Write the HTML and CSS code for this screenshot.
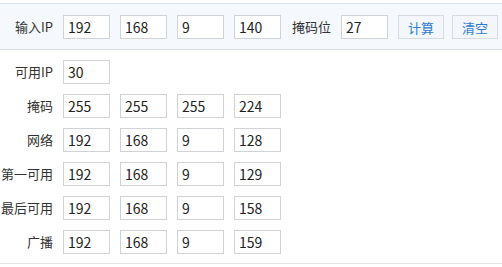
FILE: index.html
```html
<!DOCTYPE html>
<html lang="zh">
<head>
<meta charset="utf-8">
<link rel="stylesheet" href="styles.css">
</head>
<body>
<div class="calc">
  <div class="head">
    <span class="label">输入IP</span>
    <input class="box" value="192">
    <input class="box" value="168">
    <input class="box" value="9">
    <input class="box" value="140">
    <span class="label-inline">掩码位</span>
    <input class="box" value="27">
    <button class="btn">计算</button>
    <button class="btn">清空</button>
  </div>
  <div class="body">
    <div class="row"><span class="label">可用IP</span><input class="box" value="30"></div>
    <div class="row"><span class="label">掩码</span><input class="box" value="255"><input class="box" value="255"><input class="box" value="255"><input class="box" value="224"></div>
    <div class="row"><span class="label">网络</span><input class="box" value="192"><input class="box" value="168"><input class="box" value="9"><input class="box" value="128"></div>
    <div class="row"><span class="label">第一可用</span><input class="box" value="192"><input class="box" value="168"><input class="box" value="9"><input class="box" value="129"></div>
    <div class="row"><span class="label">最后可用</span><input class="box" value="192"><input class="box" value="168"><input class="box" value="9"><input class="box" value="158"></div>
    <div class="row"><span class="label">广播</span><input class="box" value="192"><input class="box" value="168"><input class="box" value="9"><input class="box" value="159"></div>
  </div>
</div>
</body>
</html>
```
FILE: styles.css
```css
html, body {
  margin: 0;
  padding: 0;
  background: #fff;
}
body {
  font-family: "Noto Sans CJK SC", "Noto Sans", sans-serif;
  font-size: 13px;
  color: #333;
}
.calc {
  margin-top: 3px;
}
.head {
  display: flex;
  align-items: center;
  gap: 10px;
  padding: 11px 0 10px 0;
  background: #f5f8fc;
  border-top: 1px solid #dde3ea;
  border-bottom: 1px solid #d9dde3;
}
.body {
  display: flex;
  flex-direction: column;
  gap: 10px;
  padding: 10px 0 9px 0;
  border-bottom: 1px solid #e3e6ea;
}
.row {
  display: flex;
  align-items: center;
  gap: 10px;
}
.label {
  width: 53px;
  text-align: right;
  white-space: nowrap;
  line-height: 24px;
}
.label-inline {
  margin-left: 1px;
  line-height: 24px;
}
.box {
  box-sizing: border-box;
  width: 47px;
  height: 24px;
  margin: 0;
  padding: 0 0 0 4px;
  border: 1px solid #cfd3d8;
  background: #fff;
  font-family: "Noto Sans CJK SC", "Noto Sans", sans-serif;
  font-size: 14px;
  color: #222;
  outline: none;
}
.btn {
  box-sizing: border-box;
  width: 46px;
  height: 24px;
  margin: 0;
  padding: 0;
  border: 1px solid #d6dce4;
  background: #f3f6fa;
  font-family: "Noto Sans CJK SC", "Noto Sans", sans-serif;
  font-size: 13px;
  color: #2f7bcf;
}
.btn + .btn {
  margin-left: -2px;
}
```
